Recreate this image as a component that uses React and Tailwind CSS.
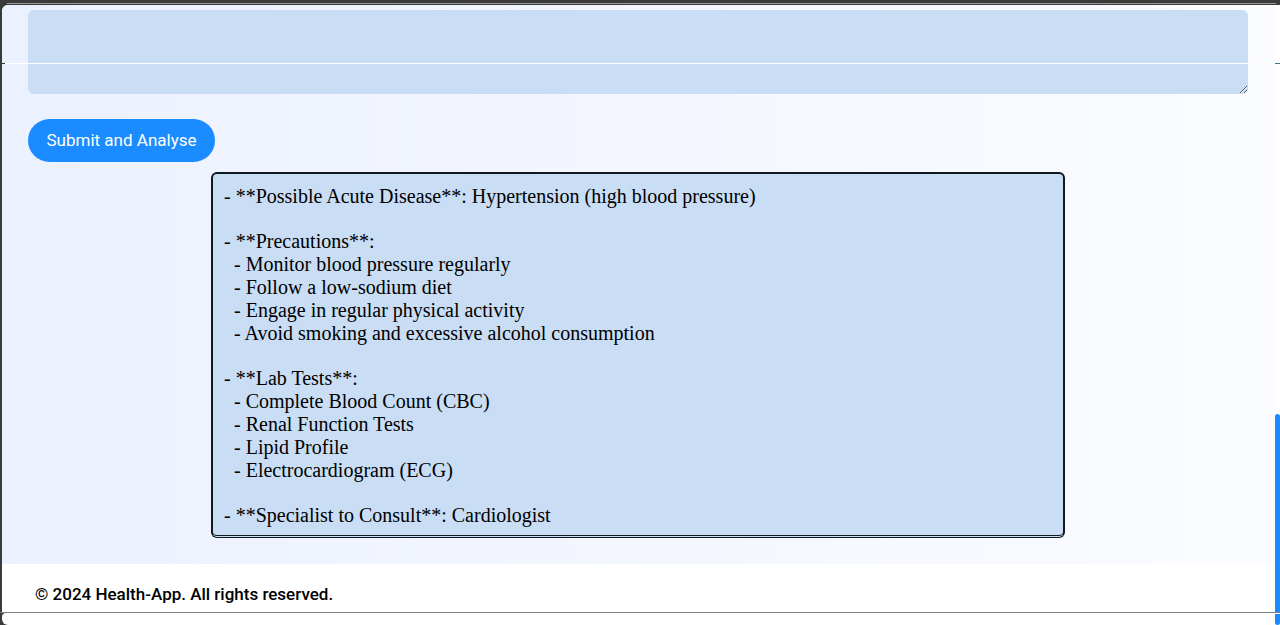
const report = [
  ['- **Possible Acute Disease**: Hypertension (high blood pressure)'],
  [
    '- **Precautions**:',
    '  - Monitor blood pressure regularly',
    '  - Follow a low-sodium diet',
    '  - Engage in regular physical activity',
    '  - Avoid smoking and excessive alcohol consumption',
  ],
  [
    '- **Lab Tests**:',
    '  - Complete Blood Count (CBC)',
    '  - Renal Function Tests',
    '  - Lipid Profile',
    '  - Electrocardiogram (ECG)',
  ],
  ['- **Specialist to Consult**: Cardiologist'],
];

function TopEdge() {
  return (
    <div className="h-[5px] bg-[#3b3b3b] pt-[3px]">
      <div className="mr-1 ml-[7px] h-px bg-[#9a9a9a]" />
    </div>
  );
}

function SymptomForm() {
  return (
    <form className="flex flex-col items-start" onSubmit={(e) => e.preventDefault()}>
      <textarea
        aria-label="Symptoms"
        className="block h-[84px] w-full resize-y rounded-md bg-[#c9ddf4] p-3 outline-none"
      />
      <button
        type="submit"
        className="mt-[25px] h-[43px] w-[187px] rounded-full bg-[#1a8cff] text-[17px] text-white"
      >
        Submit and Analyse
      </button>
    </form>
  );
}

function Report() {
  return (
    <section className="mx-auto mt-[10px] flex w-[70%] flex-col gap-[22px] rounded-md border-2 border-b-[3px] border-[#101820] [border-bottom-style:double] bg-[#c9ddf4] px-[11px] pt-[11px] pb-[8px] font-['Liberation_Serif',serif] text-[20px] leading-[23px] text-black">
      {report.map((lines) => (
        <div key={lines[0]}>
          {lines.map((line) => (
            <p key={line} className="whitespace-pre-wrap">
              {line}
            </p>
          ))}
        </div>
      ))}
    </section>
  );
}

export default function App() {
  return (
    <div className="relative flex min-h-screen flex-col bg-[#3b3b3b] font-[Roboto,sans-serif]">
      <TopEdge />
      <div className="ml-[2px] flex flex-1 overflow-hidden rounded-tl-md bg-white">
        <div className="flex min-w-0 flex-1 flex-col">
          <main className="bg-linear-to-r from-[#ecf1ff] to-[#fbfcff] pt-[5px] pr-[27px] pb-[26px] pl-[26px]">
            <SymptomForm />
            <Report />
          </main>
          <footer className="flex flex-1 items-center bg-white px-[33px] pt-[12px] text-[17px] leading-5 font-medium text-black">
            © 2024 Health-App. All rights reserved.
          </footer>
        </div>
        <div className="flex w-[5px] flex-col justify-end">
          <div className="h-[198px] rounded-t-sm bg-[#1a8cff]" />
        </div>
      </div>
      <div className="h-px bg-[#7d8087]" />
      <div className="ml-[2px] flex h-3 justify-end overflow-hidden rounded-tl-sm rounded-bl-md bg-white pt-px">
        <div className="w-[5px] rounded-b-sm bg-[#1a8cff]" />
      </div>
      <div className="pointer-events-none absolute inset-x-0 top-[63px] flex h-px">
        <div className="w-[5px] bg-[#3b3b3b]" />
        <div className="flex-1 bg-white" />
        <div className="w-[5px] bg-[#3f6f8f]" />
      </div>
    </div>
  );
}
